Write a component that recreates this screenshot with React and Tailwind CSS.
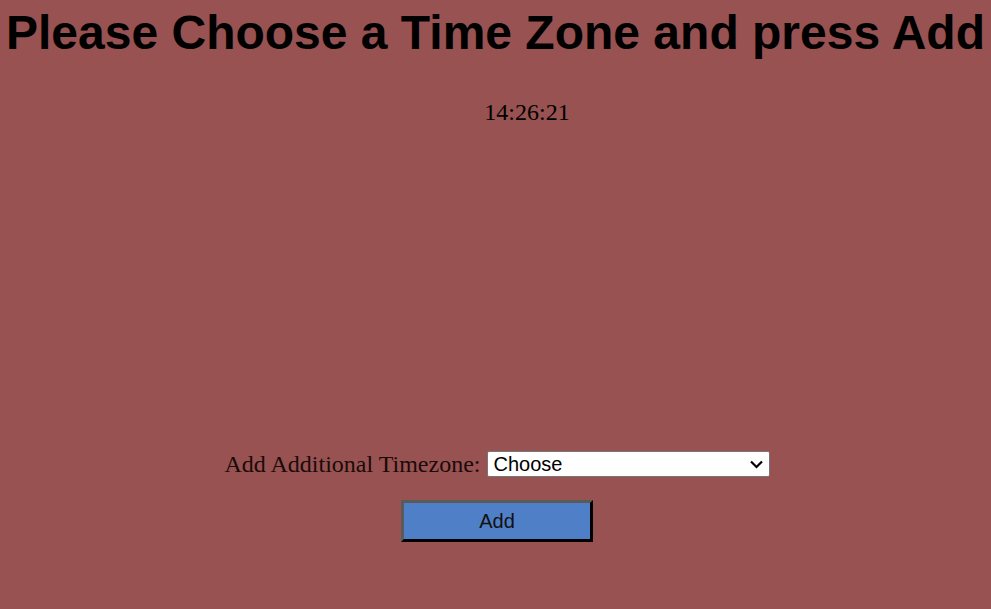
import React from 'react';

export default function App() {
  return (
    <div className="min-h-[609px] w-full bg-[#985251] flex flex-col items-center">
      <h1 className="mt-[5px] text-[48px] leading-[56px] font-bold text-black font-['Liberation_Sans',Arial,sans-serif] whitespace-nowrap">
        Please Choose a Time Zone and press Add
      </h1>
      <div className="mt-[37px] pl-[63px] text-[24px] leading-[28px] text-black font-['Liberation_Serif','Times_New_Roman',serif]">
        14:26:21
      </div>
      <div className="mt-[324px] ml-[3px] flex items-center gap-[6px] font-['Liberation_Serif','Times_New_Roman',serif]">
        <label className="text-[24px] leading-[28px] text-[#1a0a0a]">Add Additional Timezone:</label>
        <div className="relative w-[283px] h-[26px] bg-white rounded-[2px] border border-[#767676] flex items-center">
          <span className="pl-[6px] text-[20px] text-black font-['Liberation_Sans',Arial,sans-serif]">Choose</span>
          <svg className="absolute right-[6px] top-[8px]" width="13" height="9" viewBox="0 0 13 9">
            <path d="M1 1.5 L6.5 7 L12 1.5" fill="none" stroke="#000" strokeWidth="2.2" />
          </svg>
        </div>
      </div>
      <button className="mt-[22px] ml-[3px] w-[192px] h-[42px] bg-[#4f7fc6] border-[3px] border-t-[#5a5a5a] border-l-[#5a5a5a] border-r-black border-b-black text-[20px] text-[#111] font-['Liberation_Sans',Arial,sans-serif]">
        Add
      </button>
    </div>
  );
}
